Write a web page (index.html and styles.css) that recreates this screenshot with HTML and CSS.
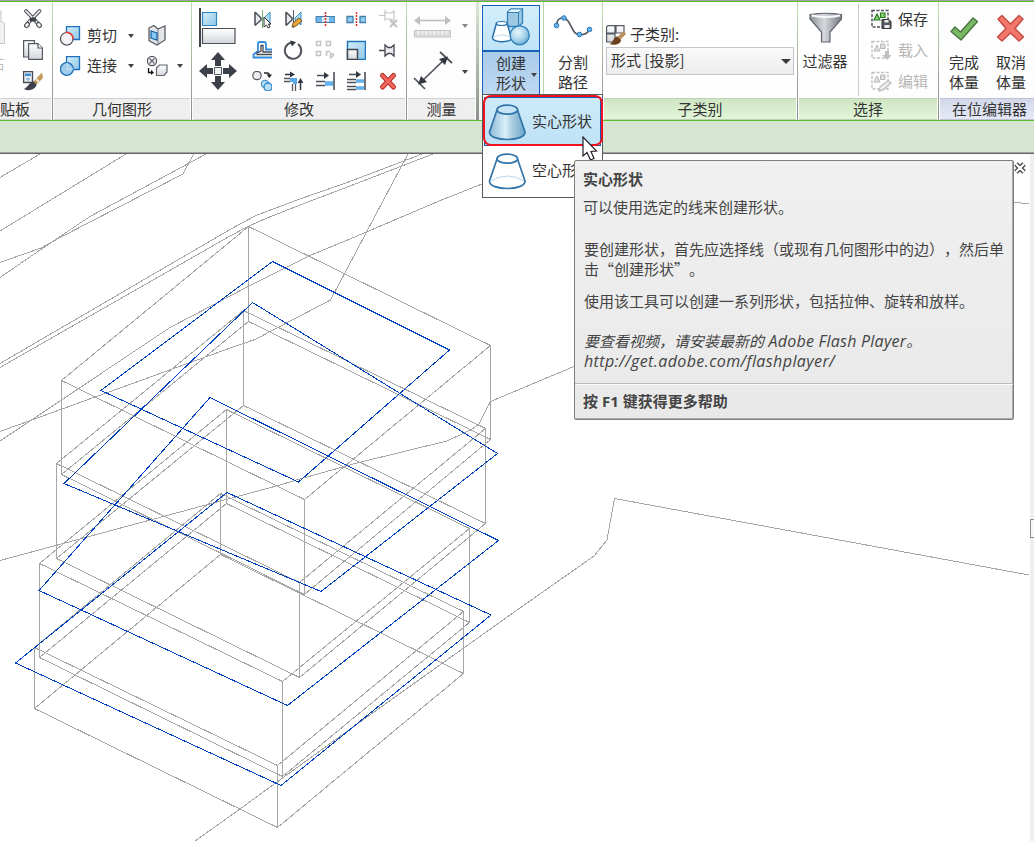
FILE: index.html
```html
<!DOCTYPE html>
<html lang="zh-CN">
<head>
<meta charset="utf-8">
<title>体量编辑器</title>
<link rel="stylesheet" href="styles.css">
</head>
<body>
<svg class="defs" width="0" height="0" aria-hidden="true">
  <defs>
    <linearGradient id="blue" x1="0" y1="0" x2="1" y2="1"><stop offset="0" stop-color="#d4eefb"/><stop offset="1" stop-color="#8fc8e6"/></linearGradient>
    <linearGradient id="grey" x1="0" y1="0" x2="0" y2="1"><stop offset="0" stop-color="#ffffff"/><stop offset="1" stop-color="#d3d6da"/></linearGradient>
    <linearGradient id="steel" x1="0" y1="0" x2="1" y2="0"><stop offset="0" stop-color="#8d9197"/><stop offset=".45" stop-color="#d5d8dc"/><stop offset="1" stop-color="#777b82"/></linearGradient>
    <linearGradient id="cone" x1="0" y1="0" x2="1" y2="0"><stop offset="0" stop-color="#8dbad6"/><stop offset=".45" stop-color="#d9eefa"/><stop offset=".65" stop-color="#a8cbdf"/><stop offset="1" stop-color="#6aa6cd"/></linearGradient>
    <radialGradient id="ball" cx=".4" cy=".35" r=".7"><stop offset="0" stop-color="#eaf7fd"/><stop offset=".6" stop-color="#a4d2ea"/><stop offset="1" stop-color="#5fa3cd"/></radialGradient>
  </defs>
</svg>

<header class="ribbon">
  <section class="panel panel-clip">
    <div class="body">
      <div class="paste">
        <svg width="6" height="48" viewBox="0 2 6 48"><path d="M-4 11H1V22H3.500L4.500 24V43.500H-4Z" fill="#f1f1f1" stroke="#c8c8c8"/></svg>
        <span>贴</span>
      </div>
      <div class="stack">
        <svg width="22" height="31" viewBox="22 3 22 31"><g fill="none" stroke="#4a4d55" stroke-width="1.200"><path d="M26 11L37.500 23M39.500 11L28 23" stroke-width="3.800" stroke-linecap="round"/><path d="M26 11L37.500 23M39.500 11L28 23" stroke="#f2f2f4" stroke-width="1.800" stroke-linecap="round"/><ellipse cx="27" cy="25" rx="2.700" ry="2" transform="rotate(-45 27 25)" fill="#fff"/><ellipse cx="39" cy="25" rx="2.700" ry="2" transform="rotate(45 39 25)" fill="#fff"/></g><path d="M30 18.500L33 17L36 18.500V21.500H30Z" fill="#3c3f47"/></svg>
        <svg width="22" height="31" viewBox="22 34 22 31"><g fill="url(#grey)" stroke="#555962" stroke-width="1.200"><path d="M23.600 40.600H34.500V57H23.600Z"/><path d="M28.600 43.600H38L42.400 48V59.400H28.600Z"/><path d="M38 43.600V48H42.400" fill="#fff"/></g></svg>
        <svg width="22" height="31" viewBox="22 65 22 31"><path d="M23.600 71.600H32.500V82.500H23.600Z" fill="#e9edf2" stroke="#454a55" stroke-width="1.300"/><path d="M25 73.500H31V76H25Z" fill="#3c8fd0"/><path d="M26 79h4M28 77.500v3.500" stroke="#6aa9da"/><path d="M33 82L42 72.500L43 78L36 85Z" fill="#c49a55"/><path d="M36 79L39 82" stroke="#e8e8e8" stroke-width="2"/><path d="M33.500 81.500C30 81 29 86 24 89C29 92 36 89 36.500 84.500Z" fill="#3d414b"/></svg>
      </div>
    </div>
    <h2>贴板</h2>
  </section>

  <section class="panel panel-geometry">
    <div class="body">
      <svg width="21" height="22" viewBox="60 25 21 22"><path d="M66.500 26.600H79.500V39.500H66.500Z" fill="url(#blue)" stroke="#1f6fba" stroke-width="1.300"/><circle cx="66.800" cy="38.800" r="6.300" fill="#f3f3f5" stroke="#50545c" stroke-width="1.200"/><path d="M65.500 32.500A6.300 6.300 0 0 1 73 39.500" fill="none" stroke="#f5392f" stroke-width="1.500"/></svg>
      <span>剪切</span><i class="caret"></i>
      <svg width="21" height="22" viewBox="147 24 21 22"><path d="M149 27L154 24.500L158 28L165 25V39L157 44L149 39.500Z" fill="#e3e5e8" stroke="#5a5e67" stroke-width="1.300"/><path d="M158 28.500V43" stroke="#777b84"/><path d="M151 30L157 32V39L151 37Z" fill="#8ac9f0" stroke="#1767a5" stroke-width="1.300"/></svg><b></b>
      <svg width="21" height="22" viewBox="60 55 21 22"><path d="M66.500 56.600H79.500V69.500H66.500Z" fill="url(#blue)" stroke="#1f6fba" stroke-width="1.300"/><circle cx="66.800" cy="69" r="6.400" fill="#9fcde9" stroke="#1f6fba" stroke-width="1.300"/><path d="M67.200 63V69H73" fill="none" stroke="#b9dff2" stroke-width="1.500"/></svg>
      <span>连接</span><i class="caret"></i>
      <svg width="21" height="22" viewBox="147 54 21 22"><circle cx="152" cy="60" r="4.600" fill="#eee" stroke="#50545c" stroke-width="1.200"/><path d="M149.500 57.500L154.500 62.500M154.500 57.500L149.500 62.500" stroke="#656973" stroke-width="1.200"/><path d="M156.500 67L159.500 64H167V71L164 74.500H156.500Z" fill="url(#grey)" stroke="#60646c" stroke-width="1.200"/><path d="M148.500 67V71.500H152" fill="none" stroke="#111" stroke-width="1.300"/><path d="M151 69L154 71.500L151 74Z" fill="#111"/></svg><i class="caret"></i>
    </div>
    <h2>几何图形</h2>
  </section>

  <section class="panel panel-modify">
    <div class="body">
      <div class="large">
        <svg width="53" height="48" viewBox="192 2 53 48"><path d="M200 8V47" stroke="#3f434c" stroke-width="2"/><path d="M202.500 12.500H216.500V25.500H202.500Z" fill="url(#blue)" stroke="#2e86c5" stroke-width="1.200"/><path d="M202.500 28.500H235V43.500H202.500Z" fill="url(#grey)" stroke="#4b4f59" stroke-width="1.200"/></svg>
        <svg width="53" height="48" viewBox="192 50 53 48"><g fill="#3c4049"><path d="M218 52L225 60H221V66H215V60H211Z"/><path d="M218 90L225 82H221V76H215V82H211Z"/><path d="M199 71L207 64V68H213V74H207V78Z"/><path d="M237 71L229 64V68H223V74H229V78Z"/></g><path d="M214.500 67.500H221.500V74.500H214.500Z" fill="#f4f4f4" stroke="#555962"/></svg>
      </div>
      <div class="tools">
        <svg viewBox="251 9 20 20"><path d="M254 12V25.500M254 12L260 18V20L254 25.500" fill="#e8eaed" stroke="#50545d" stroke-width="1.600"/><path d="M269 12V25L263 20V18Z" fill="#acdaf2" stroke="#3b8cc5"/><path d="M261.500 10V28" stroke="#71b36a"/><path d="M263 17V27L265.500 25L267 28L269 27L267.500 24H270Z" fill="#fff" stroke="#333"/></svg>
        <svg viewBox="283 9 20 20"><path d="M286 12V25.500M286 12L292 18V20L286 25.500" fill="#e8eaed" stroke="#50545d" stroke-width="1.600"/><path d="M301 12V25L295 20V18Z" fill="#acdaf2" stroke="#3b8cc5"/><path d="M293.500 10V28" stroke="#526070"/><path d="M292 27L293 23L299 18L302 21L296 26Z" fill="#e7a935" stroke="#79552b"/></svg>
        <svg viewBox="314 9 20 20"><path d="M315 16.500H334V22.500H315Z" fill="#6db6e7" stroke="#477da6"/><path d="M321 17h7v5h-7z" fill="#d9eaf5"/><path d="M324.500 12V27" stroke="#e12c2a" stroke-width="1.500" stroke-dasharray="2 1"/></svg>
        <svg viewBox="345 9 20 20"><path d="M346 16.500H352V22.500H346ZM359 16.500H365V22.500H359Z" fill="#8fcdf0" stroke="#477da6" stroke-width="1.300"/><path d="M355.500 12V27" stroke="#e12c2a" stroke-width="1.500" stroke-dasharray="2 1"/></svg>
        <svg viewBox="377 9 20 20"><g fill="none" stroke="#c4c4c6" stroke-width="1.200"><path d="M378 15.500H384M384 10V21M384 12L387 13H390L393 11V21L390 19H385"/><path d="M389 20L396 27M396 20L389 27" stroke-width="2.200"/></g></svg>

        <svg viewBox="251 40 20 20"><path d="M271 57.500H252.500V54.500L257 51V43.500Q257 42 259 42H263Q265 42 265 44V49.500H271" fill="none" stroke="#318bdc" stroke-width="1.800"/><path d="M271 54.500H256V53L260 51V45.500H262V52H271" fill="none" stroke="#454954" stroke-width="1.300"/></svg>
        <svg viewBox="283 40 20 20"><path d="M291.500 42.500A8.200 8.200 0 1 0 298 44" fill="none" stroke="#50545d" stroke-width="2"/><path d="M290 40.500L296 42L292 46.500Z" fill="#333741"/></svg>
        <svg viewBox="314 40 20 20"><g fill="none" stroke="#c4c4c6" stroke-width="1.500"><path d="M315.500 41.500h4v4h-4zM325.500 41.500h4v4h-4zM315.500 51.500h4v4h-4zM325.500 56V51.500H329M329.500 59V53.500H331Q334 55 331 56.500H330" /></g></svg>
        <svg viewBox="345 40 20 20"><path d="M346.500 41.500H364.500V59.500H346.500Z" fill="url(#blue)" stroke="#2377bd" stroke-width="1.500"/><path d="M346.500 49.500H356.500V59.500H346.500Z" fill="url(#grey)" stroke="#444851" stroke-width="1.500"/></svg>
        <svg viewBox="377 40 20 20"><path d="M378 50.500H384" stroke="#444851" stroke-width="1.500"/><path d="M384 45L387 47.500H390L393 45V56L390 53.500H387L384 56Z" fill="#eee" stroke="#444851" stroke-width="1.300"/></svg>

        <svg viewBox="251 71 20 20"><circle cx="256" cy="75.500" r="4.200" fill="#eee" stroke="#555962" stroke-width="1.200"/><path d="M263 73H266Q268 73 268.500 75" fill="none" stroke="#222" stroke-width="1.300"/><path d="M265.500 74.500H271L268.500 78Z" fill="#222"/><circle cx="264" cy="84" r="3.800" fill="#b6dff5" stroke="#2e86c5"/><circle cx="267" cy="87" r="4" fill="#b6dff5" stroke="#2e86c5" stroke-width="1.300"/></svg>
        <svg viewBox="283 71 20 20"><path d="M285 74.500H291M300.500 90V82" stroke="#333741" stroke-width="1.500"/><path d="M290 71.500L295 74.500L290 77.500ZM297.500 83L300.500 78L303.500 83Z" fill="#333741"/><path d="M284 78.500H290M284 81.500H290M292.500 84V91M295.500 84V91" stroke="#555962" stroke-width="1.300"/><path d="M290 80H295V84" fill="none" stroke="#58a9e8" stroke-width="4"/></svg>
        <svg viewBox="314 71 20 20"><path d="M316 75.500H323M333 72V90" stroke="#4b4f59" stroke-width="1.600"/><path d="M323 72L328 75.500L323 79Z" fill="#333741"/><path d="M315 81.500H324M315 85.500H324" stroke="#4b4f59" stroke-width="1.500"/><path d="M324 83.500H332" stroke="#60b0ee" stroke-width="4.500"/></svg>
        <svg viewBox="345 71 20 20"><path d="M348 74.500H355M364 72V90" stroke="#4b4f59" stroke-width="1.600"/><path d="M355 71L360 74.500L355 78Z" fill="#333741"/><path d="M346 79.500H355M346 82.500H355M346 86.500H355M346 89.500H355" stroke="#4b4f59" stroke-width="1.300"/><path d="M355 81H363M355 88H363" stroke="#60b0ee" stroke-width="3.500"/></svg>
        <svg viewBox="377 71 20 20"><path d="M381.500 75.500L392.500 87M392.500 75.500L381.500 87" stroke="#b4302a" stroke-width="5" stroke-linecap="round"/><path d="M381.500 75.500L392.500 87M392.500 75.500L381.500 87" stroke="#f0665c" stroke-width="3" stroke-linecap="round"/></svg>
      </div>
    </div>
    <h2>修改</h2>
  </section>

  <section class="panel panel-measure">
    <div class="body">
      <svg width="55" height="48" viewBox="407 2 55 48"><path d="M418 20.500H447" stroke="#bfbfc1" stroke-width="1.600"/><path d="M414 20.500L420 16V25ZM451 20.500L445 16V25Z" fill="#bfbfc1"/><path d="M414.500 30.500H450.500V37H414.500Z" fill="#ddd" stroke="#c4c4c6"/><path d="M418.500 31V34M422.500 31V34M426.500 31V34M430.500 31V34M434.500 31V34M438.500 31V34M442.500 31V34M446.500 31V34" stroke="#fff"/></svg><i class="caret dim"></i>
      <svg width="55" height="48" viewBox="407 50 55 48"><path d="M420 83L446 58M440 52L452 63M414 78L425 89" stroke="#50545d" stroke-width="1.700"/><path d="M418 84.500L421 76L427 82ZM448 56.500L439 59L445 65Z" fill="#333741"/></svg><i class="caret"></i>
    </div>
    <h2>测量</h2>
  </section>

  <div class="splitter"></div>

  <section class="panel panel-create">
    <button class="create">
      <span class="create-icon"><svg width="56" height="45" viewBox="483 6 56 45"><path d="M507.500 12L511 9H522.500V23L518.500 26.500H507.500Z" fill="#9cc8e2" stroke="#2f7fb9" stroke-width="1.300"/><path d="M507.500 12.500H518.500V26M518.500 12.500L522.500 9" fill="none" stroke="#2f7fb9"/><path d="M508 12L511 9.500H522L518 12Z" fill="#e7f6fd"/><path d="M496.500 23L492.500 37.500C492 43 511 43 511.500 38L507 23Z" fill="#fff" stroke="#256fae" stroke-width="1.500"/><ellipse cx="501.700" cy="23.500" rx="5.300" ry="2" fill="#fff" stroke="#256fae" stroke-width="1.200"/><path d="M493.500 37Q502 33 510.500 37" fill="none" stroke="#bcdff2"/><circle cx="519.700" cy="35.300" r="9.500" fill="url(#ball)" stroke="#2f7fb9" stroke-width="1.300"/></svg></span>
      <span class="create-label"><span>创建</span><span>形状</span><i class="caret"></i></span>
    </button>
    <button class="divide">
      <svg width="42" height="45" viewBox="552 6 42 45"><path d="M557 27C556 18 564 17 568 22C573 29 573 36 580 35.500C586 36 588 34 589 30.500" fill="none" stroke="#555962" stroke-width="1.700"/><g fill="#69b2e5" stroke="#2678b7"><circle cx="556.500" cy="26.500" r="2.300"/><circle cx="564" cy="19" r="2.300"/><circle cx="579.500" cy="35.500" r="2.300"/><circle cx="589.500" cy="30.500" r="2.300"/></g></svg>
      <span>分割</span><span>路径</span>
    </button>
  </section>

  <section class="panel green panel-sub">
    <div class="body">
      <label><svg width="22" height="22" viewBox="605 23 22 22"><g fill="url(#grey)" stroke="#555962" stroke-width="1.200"><path d="M608 24.600H615V32H606.600V26ZM616 24.600H624V32H616ZM606.600 33H615V41H606.600Z"/></g><path d="M617 36L624 30.500L626 33L620 39Z" fill="#b98e5d"/><path d="M617 35.500C613 36 614 42 609 43C615 45 621 43 621 39Z" fill="#70401d"/></svg><span>子类别:</span></label>
      <div class="combo"><span>形式 [投影]</span><i></i></div>
    </div>
    <h2>子类别</h2>
  </section>

  <section class="panel green panel-select">
    <div class="body">
      <div class="tall filter">
        <svg width="38" height="45" viewBox="806 6 38 45"><path d="M810 14.500Q826 12 841.500 14.500V19L830 32V42H821.500V32L810 19Z" fill="url(#steel)" stroke="#60656e" stroke-width="1.200"/><path d="M811.500 15.500Q826 18.500 840 15.500" fill="none" stroke="#f7f7f7" stroke-width="2"/></svg>
        <span>过滤器</span>
      </div>
      <ul class="rows">
        <li><svg width="21" height="22" viewBox="871 9 21 22"><path d="M872 10.500H888V27H872Z" fill="none" stroke="#4c4f55" stroke-width="1.400" stroke-dasharray="3 1.500"/><path d="M874 20L877 14L880 20ZM880.500 13h4.500v4.500h-4.500z" fill="#8ad06e" stroke="#287a25" stroke-width="1.200"/><path d="M882 19.500H889L891 21.500V28.500H882Z" fill="#555962" stroke="#333"/><path d="M884.500 20h4v2.500h-4zM884.500 25h5v3h-5z" fill="#eee"/></svg>保存</li>
        <li class="off"><svg width="21" height="22" viewBox="871 40 21 22"><path d="M872 41.500H888V58H872Z" fill="none" stroke="#c0c0c2" stroke-width="1.400" stroke-dasharray="3 1.500"/><path d="M874 51L877 45L880 51ZM880.500 44h4.500v4.500h-4.500z" fill="#ddd" stroke="#b9b9bb"/><path d="M885 51H889V55H891.500L887 60L882 55H885Z" fill="#c0c0c2"/></svg>载入</li>
        <li class="off"><svg width="21" height="22" viewBox="871 71 21 22"><path d="M872 72.500H888V89H872Z" fill="none" stroke="#c0c0c2" stroke-width="1.400" stroke-dasharray="3 1.500"/><path d="M874 82L877 76L880 82ZM880.500 75h4.500v4.500h-4.500z" fill="#ddd" stroke="#b9b9bb"/><path d="M879 91L880 87L888 80.500L891 83L883 90Z" fill="#eee" stroke="#bcbcbe" stroke-width="1.300"/></svg>编辑</li>
      </ul>
    </div>
    <h2>选择</h2>
  </section>

  <section class="panel blue panel-edit">
    <div class="body">
      <div class="tall">
        <svg width="36" height="45" viewBox="947 6 36 45"><path d="M952 31.500L956 27L961.500 32L974 18L978.500 21.500L962 40Z" fill="#79b865" stroke="#47723c" stroke-width="1.300" stroke-linejoin="round"/></svg>
        <span>完成</span><span>体量</span>
      </div>
      <div class="tall">
        <svg width="36" height="45" viewBox="995 6 36 45"><path d="M1000 19L1004 15.500L1012.500 24L1021 15.500L1025 19L1017 28.500L1025.500 37L1021 41L1012.500 33L1004 41L999.500 37L1008 28.500Z" fill="#f2776b" stroke="#c54b43" stroke-width="1.400" stroke-linejoin="round"/></svg>
        <span>取消</span><span>体量</span>
      </div>
    </div>
    <h2>在位编辑器</h2>
  </section>
</header>

<div class="options-bar"></div>

<main class="view">
  <svg class="wire" viewBox="0 154 1030 687" width="1030" height="687">
    <g class="terrain">
      <path d="M0 177.500L40 154M0 231L126 154"/>
      <path d="M0 262.500L41 248L61 237L183 174L193.500 154"/>
      <path d="M0 277.500L43 248L90 216.500L206 154"/>
      <path d="M0 363.500L230 229.500L256 215.500L297 200L350 181.500L422 154"/>
      <path d="M0 367.500L230 236L248 226.500L267 218L313 200L350 186L433 154"/>
      <path d="M408 154L383.500 200L330.500 300L275 329L255 339.500L233 347L0 431.500"/>
      <path d="M0 441L33 419L170 327.500L213 305L248 286.500L310 255.500L350 239L441.500 200L482 184"/>
      <path d="M0 560.500L280 485L298 479.500L357 463L447 441L471.500 429.500L479 424L490.500 401.500L574 366.500"/>
      <path d="M1013 202.500L1029 203.500"/>
      <path d="M1029 575L614.500 498.500L607 540L594 556L510 615L463 648.500L353 727L277 782L240 809L195 841"/>
    </g>
    <g class="mass">
      <path d="M248.500 226.500L490.500 345.500L304.500 499.500L61.500 380.500Z"/>
      <path d="M248.500 321.500L490.500 439.500L304.500 594.500L61.500 474.500Z"/>
      <path d="M248.500 226V321M490.500 345V439M304.500 499V594M61.500 380V474"/>
      <path d="M243.500 310.500L485.500 428.500L299.500 582.500L56.500 463.500Z"/>
      <path d="M243.500 405.500L485.500 523.500L299.500 677.500L56.500 558.500Z"/>
      <path d="M243.500 310V405M485.500 428V523M299.500 582V677M56.500 463V558"/>
      <path d="M226.500 409.500L469.500 528.500L282.500 681.500L39.500 563.500Z"/>
      <path d="M226.500 503.500L469.500 622.500L282.500 776.500L39.500 657.500Z"/>
      <path d="M226.500 409V503M469.500 528V622M282.500 681V776M39.500 563V657"/>
      <path d="M220.500 493.500L463.500 611.500L277.500 765.500L34.500 647.500Z"/>
      <path d="M220.500 554.500L463.500 673.500L277.500 827.500L34.500 708.500Z"/>
      <path d="M220.500 493V554M463.500 611V673M277.500 765V827M34.500 647V708"/>
    </g>
    <g class="profile">
      <path d="M272.500 261.500L449.500 350L298.500 482L101 390.500Z"/>
      <path d="M252.500 302.500L497.500 453.500L321 591.500L64 483.500Z"/>
      <path d="M210 397.500L498.500 540.500L287.500 705.500L39 590.500Z"/>
      <path d="M227 492.500L491 615L281 785.500L15.500 663Z"/>
    </g>
  </svg>
  <div class="edge"><i></i></div>
</main>

<div class="menu">
  <div class="item current"><svg width="42" height="46" viewBox="486 98 42 46"><path d="M497 109L489.500 131C489 141 525.500 141 525 131L517.500 109Z" fill="url(#cone)" stroke="#3475a9" stroke-width="1.700"/><ellipse cx="507.300" cy="108.700" rx="10.300" ry="4.500" fill="#c7e5f5" stroke="#3475a9" stroke-width="1.700"/></svg><span>实心形状</span></div>
  <div class="item"><svg width="42" height="46" viewBox="486 148 42 46"><path d="M497 159L489.500 181C489 191 525.500 191 525 181L517.500 159Z" fill="#fff" stroke="#3475a9" stroke-width="1.700"/><path d="M491 181Q507 171 524 181" fill="none" stroke="#b3d7f0"/><ellipse cx="507.300" cy="158.700" rx="10.300" ry="4.500" fill="#fff" stroke="#3475a9" stroke-width="1.700"/></svg><span>空心形状</span></div>
</div>
<div class="highlight"></div>

<svg class="close" width="12" height="12" viewBox="0 0 12 12"><path d="M2 2L10 10M10 2L2 10" stroke="#4a4a4a" stroke-width="4.800"/><path d="M2 2L10 10M10 2L2 10" stroke="#fff" stroke-width="2.200"/></svg>
<svg class="cursor" width="18" height="26" viewBox="0 0 18 26"><path d="M1 1V20L5 16.500L8.500 24L12 22.500L9 15.500L14.500 15Z" fill="#fff" stroke="#20202a" stroke-width="1.200"/></svg>

<aside class="tooltip">
  <h3>实心形状</h3>
  <p class="lead">可以使用选定的线来创建形状。</p>
  <p class="detail">要创建形状，首先应选择线（或现有几何图形中的边），然后单击“创建形状”。</p>
  <p class="usage">使用该工具可以创建一系列形状，包括拉伸、旋转和放样。</p>
  <p class="video">要查看视频，请安装最新的<span class="latin name"> Adobe Flash Player</span>。<br><span class="latin url">http://get.adobe.com/flashplayer/</span></p>
  <footer>按<span class="latin"> F1 </span>键获得更多帮助</footer>
</aside>
</body>
</html>
```

FILE: styles.css
```css
* { box-sizing: border-box; }
body {
  margin: 0;
  width: 1034px;
  height: 841px;
  position: relative;
  overflow: hidden;
  background: #fff;
  color: #333;
  font: 15px/20px "Noto Sans CJK SC", sans-serif;
  text-spacing-trim: space-all;
}
svg { display: block; flex: none; }
.defs { position: absolute; }
h2, h3, p, ul { margin: 0; padding: 0; font-size: 15px; font-weight: 400; }
button { border: 0; padding: 0; background: none; font: inherit; color: inherit; }

/* ribbon */
.ribbon {
  display: flex;
  height: 121px;
  border-top: 1px solid #a0a0a0;
  border-bottom: 1px solid #5cbf2a;
  box-shadow: inset 0 1px #5cbf2a;
  padding-top: 1px;
}
.panel {
  display: flex;
  flex-direction: column;
  flex: none;
  padding-right: 1px;
  background: linear-gradient(#bfe0b3, #8b8b8b) right / 1px 100% no-repeat, linear-gradient(#fff 50%, #fcfcfc);
}
.panel .body { height: 96px; display: flex; }
.panel h2 {
  height: 22px;
  line-height: 20px;
  margin: 0 1px;
  text-align: center;
  white-space: nowrap;
  background: #efefef;
  border-top: 1px solid #cfd0d4;
  border-bottom: 1px solid #d2d2d2;
}
.green h2 { background: linear-gradient(#cfe5c4, #e1f6d7); border-color: #bdd0b4; }
.blue h2 { background: linear-gradient(#d3d8ea, #e5e9f7); border-color: #bcc1d3; }
.caret {
  width: 0;
  height: 0;
  border: 3px solid transparent;
  border-top: 4px solid #444;
  border-bottom: 0;
}
.caret.dim { border-top-color: #888; }

.panel-clip { width: 53px; overflow: hidden; }
.panel-clip h2 { margin-left: 0; padding-right: 22px; text-align: right; }
.paste { width: 6px; margin-right: 16px; overflow: hidden; color: #bbb; }
.paste span { display: flex; width: 4px; justify-content: flex-end; white-space: nowrap; margin-top: 3px; }
.stack { padding-top: 1px; }

.panel-geometry { width: 139px; }
.panel-geometry .body {
  display: grid;
  grid-template: 30px 30px / 27px 41px 19px 30px 1fr;
  padding: 19px 0 0 7px;
  align-items: center;
}
.panel-geometry span { margin-top: -2px; }

.panel-modify { width: 215px; }
.tools {
  display: grid;
  grid-template: repeat(3, 31px) / repeat(5, 31.5px);
  place-items: center;
  padding: 1px 0 0 1px;
}
.tools svg { width: 20px; height: 20px; }

.panel-measure { width: 69px; background: #fdfdfd; padding: 0; }
.panel-measure .body { display: grid; grid-template: 48px 48px / 55px 1fr; align-items: center; }
.panel-measure .body .caret:last-child { margin-bottom: 5px; }

.splitter { width: 6px; padding: 0; background: linear-gradient(#d9e8d3, #8c8f8b); border-right: 2px solid #f4f8f2; }

.panel-create { width: 122px; flex-direction: row; padding-left: 1px; }
.create {
  width: 58px;
  height: 90px;
  margin: 3px 0 0;
  display: flex;
  flex-direction: column;
  border: 1px solid #1760b8;
}
.create-icon { width: 56px; height: 46px; background: linear-gradient(#d3eefb, #c0e4f7); border-bottom: 2px solid #1760b8; overflow: hidden; }
.create-label {
  width: 56px;
  height: 42px;
  padding: 1px 12px 0 13px;
  display: flex;
  flex-direction: column;
  background: linear-gradient(#a9cbea, #bed8f1);
  position: relative;
  text-align: left;
}
.create-label .caret { position: absolute; right: 2px; top: 21px; }
.divide { width: 61px; margin-left: 3px; border-left: 1px solid #b4d3a7; display: flex; flex-direction: column; align-items: center; height: 96px; padding-top: 3px; }
.divide span, .tall span { line-height: 20px; }
.divide svg { margin-bottom: 2px; }

.panel-sub { width: 195px; }
.panel-sub .body { flex-direction: column; padding: 21px 3px 0; }
.panel-sub label { display: flex; align-items: center; gap: 3px; height: 24px; margin-left: -1px; }
.panel-sub span { margin-top: -2px; }
.combo {
  width: 188px;
  height: 28px;
  display: flex;
  align-items: center;
  justify-content: space-between;
  padding: 0 2px 0 4px;
  border: 1px solid #c5c5c9;
  background: linear-gradient(#fafafa, #ececec);
}
.combo i { border: 5px solid transparent; border-top-color: #3a3a3a; border-bottom: 0; }

.panel-select { width: 141px; }
.tall { display: flex; flex-direction: column; align-items: center; width: 48px; padding-top: 4px; }
.tall svg { margin-bottom: 1px; }
.filter { width: 61px; height: 92px; margin-top: 2px; padding: 2px 6px 0 0; border-right: 1px solid #cacace; }
.filter svg { margin-bottom: 0; }
.rows { list-style: none; padding: 2px 0 0 12px; }
.rows li { display: flex; align-items: center; gap: 6px; height: 31px; padding-bottom: 2px; }
.rows svg { margin-top: 2px; }
.rows .off { color: #b7b7b7; }

.panel-edit { width: 95px; background: #fdfdfd; padding: 0; }
.panel-edit .body { padding-left: 2px; }
.panel-edit .tall + .tall { margin-left: 1px; }
.panel-edit h2 { margin-right: 0; padding-left: 5px; }

.options-bar { height: 33px; background: #d8e4d2; border-bottom: 1px solid #62656a; box-shadow: inset 0 -1px #a0a49e; }

/* drawing view */
.view { display: flex; height: 687px; }
.wire path { fill: none; stroke-width: 1px; shape-rendering: crispEdges; }
.terrain, .mass { stroke: #a6a6a6; }
.wire .profile { stroke: #0041bd; }
.edge { width: 4px; background: #efefef; padding-top: 365px; }
.edge i { display: block; height: 19px; border: 1px solid #8c8c8c; border-right: 0; background: #f7f7f7; }

/* drop-down menu over the view */
.menu {
  position: absolute;
  left: 482px;
  top: 94px;
  width: 121px;
  height: 104px;
  padding: 2px 1px;
  border: 1px solid #555a5e;
  background: #fff;
}
.item { display: flex; align-items: center; height: 49px; gap: 4px; padding-left: 1px; border: 1px solid transparent; white-space: nowrap; }
.item span { margin-top: -2px; }
.item.current { background: linear-gradient(#cdeafa, #bfe2f6); border-color: #1760b8; }
.highlight { position: absolute; left: 483px; top: 95px; width: 120px; height: 51px; border: 2px solid #f0121c; border-radius: 8px; }
.close { position: absolute; left: 1014px; top: 162px; }
.cursor { position: absolute; left: 582px; top: 136px; }

.tooltip {
  position: absolute;
  left: 574px;
  top: 160px;
  width: 440px;
  height: 260px;
  padding: 8px 8px 0;
  border: 1px solid #7d7d7d;
  border-radius: 2px;
  box-shadow: inset -1px -1px #aaa;
  background: linear-gradient(#f0f0f0, #e9e9e9);
  color: #444;
}
.tooltip h3 { font-weight: 700; }
.lead { margin-top: 8px; }
.tooltip .detail { margin-top: 22px; width: 421px; padding-left: 1px; }
.usage { margin-top: 12px; padding-left: 1px; }
.video { height: 40px; margin-top: 20px; padding-left: 1px; font-style: italic; }
.latin { font-family: "Open Sans", sans-serif; line-height: 1; }
.name { font-size: 16px; letter-spacing: 0.25px; }
.url { font-size: 16px; letter-spacing: 0.4px; }
.tooltip footer {
  margin: 12px -8px 0;
  padding: 7px 8px 0;
  border-top: 1px solid #b9b9b9;
  box-shadow: inset 0 1px #fafafa;
  font-weight: 700;
}
```
